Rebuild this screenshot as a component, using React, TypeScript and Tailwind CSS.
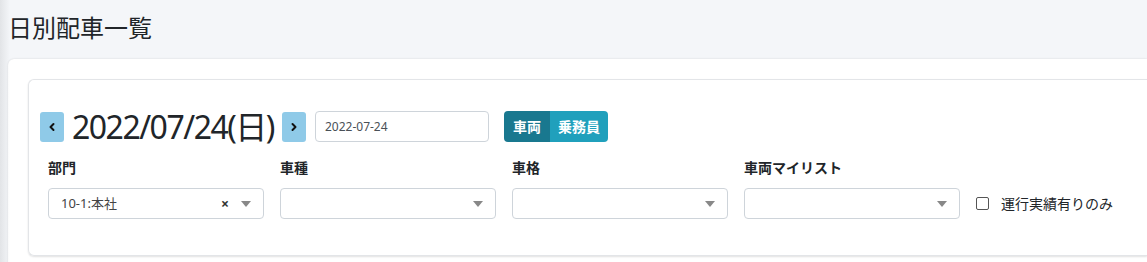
import { ChevronLeft, ChevronRight } from 'lucide-react';

const font = { fontFamily: '"Noto Sans", "Noto Sans CJK JP", sans-serif' };

function Caret() {
  return (
    <svg width="10" height="6" viewBox="0 0 10 6" className="shrink-0">
      <path d="M0 0 L10 0 L5 6 Z" fill="#888" />
    </svg>
  );
}

function SelectBox({ label, value, clearable }: { label: string; value?: string; clearable?: boolean }) {
  return (
    <div className="w-[216px] flex flex-col">
      <label className="text-[14px] font-bold text-[#212529] leading-[20px] mb-[10px]">{label}</label>
      <div className="h-[31px] border border-[#ced4da] rounded-[4px] flex items-center pl-[12px] pr-[12px] bg-white">
        <span className="flex-1 text-[13px] text-[#444]">{value}</span>
        {clearable && <span className="text-[14px] font-bold text-[#333] mr-[12px] leading-none">×</span>}
        <Caret />
      </div>
    </div>
  );
}

export default function App() {
  return (
    <div className="w-[1147px] h-[262px] bg-[#f4f6f9] relative overflow-hidden" style={font}>
      {/* sidebar shadow */}
      <div className="absolute left-0 top-0 bottom-0 w-[10px] bg-gradient-to-r from-[#e2e4e7] to-transparent" />

      <h1 className="pl-[8px] pt-[10px] h-[59px] text-[24px] leading-[36px] text-[#212529] font-normal">日別配車一覧</h1>

      <div className="ml-[8px] bg-white rounded-l-[6px] shadow-[0_0_2px_rgba(0,0,0,0.15)] pl-[20px] pt-[20px] pb-[20px]">
        <div className="border border-r-0 border-[#e3e5e8] rounded-l-[6px] shadow-[0_1px_2px_rgba(0,0,0,0.12)] pl-[11px] pt-[31px] h-[177px]">
          <div className="flex items-center h-[31px]">
            <button className="w-[24px] h-[30px] rounded-[3px] bg-[#8fcae8] flex items-center justify-center">
              <ChevronLeft className="w-[12px] h-[12px] text-[#111]" strokeWidth={4} />
            </button>
            <span className="ml-[8px] text-[32px] leading-[40px] tracking-[-1.5px] text-[#212529]">2022/07/24(日)</span>
            <button className="ml-[8px] w-[24px] h-[30px] rounded-[3px] bg-[#8fcae8] flex items-center justify-center">
              <ChevronRight className="w-[12px] h-[12px] text-[#111]" strokeWidth={4} />
            </button>
            <div className="ml-[9px] w-[174px] h-[31px] border border-[#ced4da] rounded-[4px] flex items-center pl-[9px] text-[12px] text-[#495057]">
              2022-07-24
            </div>
            <div className="ml-[15px] flex h-[31px] rounded-[4px] overflow-hidden text-[14px] font-bold text-white">
              <span className="bg-[#19788f] px-[9px] flex items-center">車両</span>
              <span className="bg-[#20a0bc] px-[8px] flex items-center">乗務員</span>
            </div>
          </div>

          <div className="flex items-end gap-[16px] mt-[16px] ml-[8px]">
            <SelectBox label="部門" value="10-1:本社" clearable />
            <SelectBox label="車種" />
            <SelectBox label="車格" />
            <SelectBox label="車両マイリスト" />
            <label className="flex items-center h-[31px] gap-[12px] text-[14px] text-[#212529]">
              <span className="w-[13px] h-[13px] border border-[#555] rounded-[2px] bg-white" />
              運行実績有りのみ
            </label>
          </div>
        </div>
      </div>
    </div>
  );
}
